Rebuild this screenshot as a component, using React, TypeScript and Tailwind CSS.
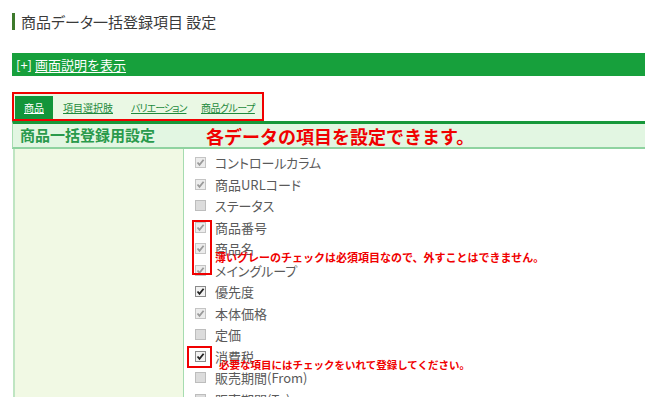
import type { ReactNode } from "react";

type Box = "fixed" | "off" | "on";

const items: { label: string; box: Box }[] = [
  { label: "コントロールカラム", box: "fixed" },
  { label: "商品URLコード", box: "fixed" },
  { label: "ステータス", box: "off" },
  { label: "商品番号", box: "fixed" },
  { label: "商品名", box: "fixed" },
  { label: "メイングループ", box: "fixed" },
  { label: "優先度", box: "on" },
  { label: "本体価格", box: "fixed" },
  { label: "定価", box: "off" },
  { label: "消費税", box: "on" },
  { label: "販売期間(From)", box: "off" },
  { label: "販売期間(To)", box: "off" }
];

const tabs = [
  { title: "項目選択肢", cls: "w-[68px]" },
  { title: "バリエーション", cls: "w-[70px] tracking-[-1px]" },
  { title: "商品グループ", cls: "w-[56px] tracking-[-0.5px]" }
];

function CheckBox({ box }: { box: Box }) {
  const frame =
    box === "on"
      ? "border-[#8a8a8a] bg-[#f2f2f2]"
      : box === "fixed"
        ? "border-[#c4c4c4] bg-[#ececec]"
        : "border-[#bdbdbd] bg-[#dcdcdc]";

  return (
    <span className={`grid h-[11px] w-[11px] shrink-0 place-items-center border ${frame}`}>
      {box !== "off" && (
        <svg width="9" height="9" viewBox="0 0 9 9">
          <path
            d="M1.5 4.5 L3.5 6.8 L7.6 1.8"
            fill="none"
            stroke={box === "on" ? "#222" : "#9a9a9a"}
            strokeWidth="1.8"
          />
        </svg>
      )}
    </span>
  );
}

function Note({ className, children }: { className: string; children: ReactNode }) {
  return (
    <span
      className={`absolute whitespace-nowrap leading-none font-bold text-[#f00000] [font-feature-settings:normal] ${className}`}
    >
      {children}
    </span>
  );
}

export default function App() {
  return (
    <div className="relative h-[397px] w-[645px] overflow-hidden bg-white font-['Noto_Sans_CJK_JP','Noto_Sans',sans-serif] [font-feature-settings:'palt'] text-[#333]">
      <div className="ml-[12px] mt-[13px] flex h-[17px] items-center gap-[6px]">
        <span className="h-[17px] w-[3px] bg-[#3d7a2c]" />
        <h1 className="text-[15px] leading-none text-[#3a3a3a]">商品データ一括登録項目 設定</h1>
      </div>

      <div className="ml-[12px] mt-[23px] flex h-[23px] items-center gap-[3px] bg-[#17a03c] pl-[4px] text-[13px] text-white">
        <span>[+]</span>
        <span className="underline underline-offset-2 [font-feature-settings:normal]">画面説明を表示</span>
      </div>

      <div className="ml-[12px] mt-[16px] flex h-[29px] w-[252px] items-end border-2 border-[#f00000] bg-[#eaf8e4] pl-[1px]">
        <span className="flex h-[23px] w-[38px] items-center justify-center bg-[#12953a] text-[10px] text-white underline">
          商品
        </span>
        <div className="flex h-[23px] items-center pl-[10px] text-[10px] whitespace-nowrap text-[#1e8a3c] underline">
          {tabs.map((t) => (
            <span key={t.title} className={t.cls}>
              {t.title}
            </span>
          ))}
        </div>
      </div>

      <div className="ml-[12px] flex h-[28px] items-center border-t-[3px] border-b-2 border-l border-t-[#17983a] border-b-[#8fd3a0] border-l-[#a6dcb0] bg-[#e2f6e2]">
        <span className="w-[193px] pl-[7px] text-[15px] font-bold text-[#2a9a4c] [font-feature-settings:normal]">
          商品一括登録用設定
        </span>
        <span className="text-[18px] leading-none font-bold text-[#f00000] [font-feature-settings:normal]">
          各データの項目を設定できます。
        </span>
      </div>

      <div className="ml-[13px] flex h-[260px]">
        <div className="w-[171px] border-l-2 border-r border-l-[#bfe5c2] border-r-[#a6dcb0] bg-[#f1f9e4]" />
        <div className="relative flex-1 pt-[3px]">
          {items.map((it) => (
            <div key={it.label} className="flex h-[21.5px] items-center gap-[9px] pl-[11px] text-[13px] text-[#5a5a5a]">
              <CheckBox box={it.box} />
              <span>{it.label}</span>
            </div>
          ))}

          <span className="absolute left-[8px] top-[71px] h-[55px] w-[20px] border-2 border-[#f00000]" />
          <span className="absolute left-[3px] top-[197px] h-[22px] w-[25px] border-2 border-[#f00000]" />
          <Note className="left-[31px] top-[103px] text-[11px]">
            薄いグレーのチェックは必須項目なので、外すことはできません。
          </Note>
          <Note className="left-[35px] top-[211px] text-[10.5px]">必要な項目にはチェックをいれて登録してください。</Note>
        </div>
      </div>
    </div>
  );
}
